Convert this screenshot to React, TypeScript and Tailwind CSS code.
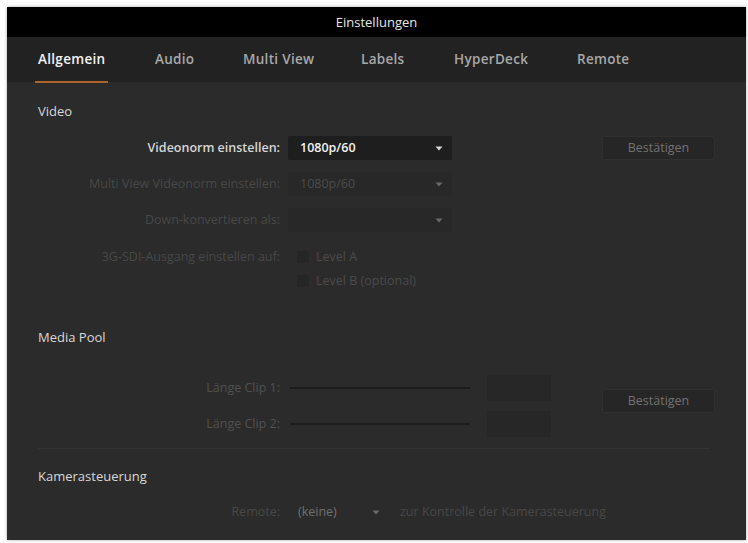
const TABS = [
  { name: "Allgemein", w: "w-[117px]" },
  { name: "Audio", w: "w-[88px]" },
  { name: "Multi View", w: "w-[118px]" },
  { name: "Labels", w: "w-[93px]" },
  { name: "HyperDeck", w: "w-[123px]" },
  { name: "Remote", w: "w-[80px]" },
];

function Arrow({ dim }: { dim?: boolean }) {
  return (
    <svg width="8" height="5" viewBox="0 0 8 5" className={dim ? "text-[#6a6a6a]" : "text-[#d8d8d8]"}>
      <path d="M0.5 0.5h7L4 4.5z" fill="currentColor" />
    </svg>
  );
}

function Select({ value, active }: { value: string; active?: boolean }) {
  return (
    <div
      className={`flex h-[24px] w-[164px] items-center justify-between rounded-[2px] pl-[12px] pr-[9px] ${
        active ? "bg-[#1e1e1e] text-[#f2f2f2] font-semibold" : "bg-[#282828] text-[#4c4c4c]"
      }`}
    >
      <span>{value}</span>
      <Arrow dim={!active} />
    </div>
  );
}

function Label({ children, bright }: { children: string; bright?: boolean }) {
  return (
    <div className={`w-[242px] text-right ${bright ? "text-[#d6d6d6] font-semibold" : "text-[#484848]"}`}>
      {children}
    </div>
  );
}

function Confirm() {
  return (
    <div className="flex h-[24px] w-[113px] items-center justify-center rounded-[2px] border border-[#303030] bg-[#262626] text-[#727272]">
      Bestätigen
    </div>
  );
}

function Check({ label }: { label: string }) {
  return (
    <div className="flex h-[24px] items-center gap-[7px] pl-[9px] text-[#4a4a4a]">
      <div className="h-[12px] w-[12px] rounded-[2px] bg-[#262626]" />
      <span>{label}</span>
    </div>
  );
}

export default function App() {
  return (
    <div className="h-[543px] w-[748px] bg-white pl-[7px] pt-[7px]" style={{ fontFamily: '"Open Sans", "DejaVu Sans", sans-serif' }}>
      <div className="flex h-[533px] w-[739px] flex-col bg-[#2b2b2b] text-[12.5px] shadow-[0_0_3px_rgba(0,0,0,0.35)]">
        {/* title */}
        <div className="flex h-[30px] items-center justify-center bg-black pt-[1px] text-[13px] font-medium text-[#e6e6e6]">
          Einstellungen
        </div>

        {/* tabs */}
        <div className="flex h-[45px] items-stretch bg-[#222222] pl-[31px] text-[13.5px] font-semibold tracking-[0.3px]">
          {TABS.map((t, i) => (
            <div key={t.name} className={`flex items-center ${t.w}`}>
              <span className={`relative ${i === 0 ? "text-[#f2f2f2]" : "text-[#a8a8a8]"}`}>
                {t.name}
                {i === 0 && <span className="absolute -bottom-[13px] -left-[3px] -right-[3px] h-[2px] bg-[#b0632a]" />}
              </span>
            </div>
          ))}
        </div>

        {/* content */}
        <div className="flex flex-col pl-[31px] pr-[31px] pt-[19px]">
          <div className="h-[20px] text-[13px] leading-[20px] text-[#d8d8d8]">Video</div>

          <div className="mt-[9px] flex h-[36px] items-center">
            <Label bright>Videonorm einstellen:</Label>
            <div className="ml-[8px]">
              <Select value="1080p/60" active />
            </div>
            <div className="ml-auto">
              <Confirm />
            </div>
          </div>
          <div className="flex h-[36px] items-center">
            <Label>Multi View Videonorm einstellen:</Label>
            <div className="ml-[8px]">
              <Select value="1080p/60" />
            </div>
          </div>
          <div className="flex h-[36px] items-center">
            <Label>Down-konvertieren als:</Label>
            <div className="ml-[8px]">
              <Select value="" />
            </div>
          </div>
          <div className="mt-[7px] flex">
            <div className="flex h-[24px] items-center">
              <Label>3G-SDI-Ausgang einstellen auf:</Label>
            </div>
            <div className="ml-[8px] flex flex-col">
              <Check label="Level A" />
              <Check label="Level B (optional)" />
            </div>
          </div>

          <div className="mt-[34px] h-[20px] text-[13px] leading-[20px] text-[#d8d8d8]">Media Pool</div>

          <div className="mt-[23px] flex">
            <div className="flex flex-col">
              {["Länge Clip 1:", "Länge Clip 2:"].map((l) => (
                <div key={l} className="flex h-[36px] items-center">
                  <div className="w-[242px] text-right text-[#505050]">{l}</div>
                  <div className="ml-[10px] h-[2px] w-[180px] bg-[#1d1d1d]" />
                  <div className="ml-[17px] h-[26px] w-[64px] rounded-[2px] bg-[#272727]" />
                </div>
              ))}
            </div>
            <div className="ml-auto mt-[19px]">
              <Confirm />
            </div>
          </div>

          <div className="mt-[6px] h-px w-[672px] bg-[#333333]" />

          <div className="mt-[17px] h-[20px] text-[13px] leading-[20px] text-[#d8d8d8]">Kamerasteuerung</div>

          <div className="mt-[14px] flex h-[24px] items-center">
            <Label>Remote:</Label>
            <div className="ml-[8px]">
              <div className="flex h-[24px] w-[100px] items-center justify-between pl-[10px] pr-[8px] text-[#707070]">
                <span>(keine)</span>
                <Arrow dim />
              </div>
            </div>
            <div className="ml-[12px] text-[#484848]">zur Kontrolle der Kamerasteuerung</div>
          </div>
        </div>
      </div>
    </div>
  );
}
